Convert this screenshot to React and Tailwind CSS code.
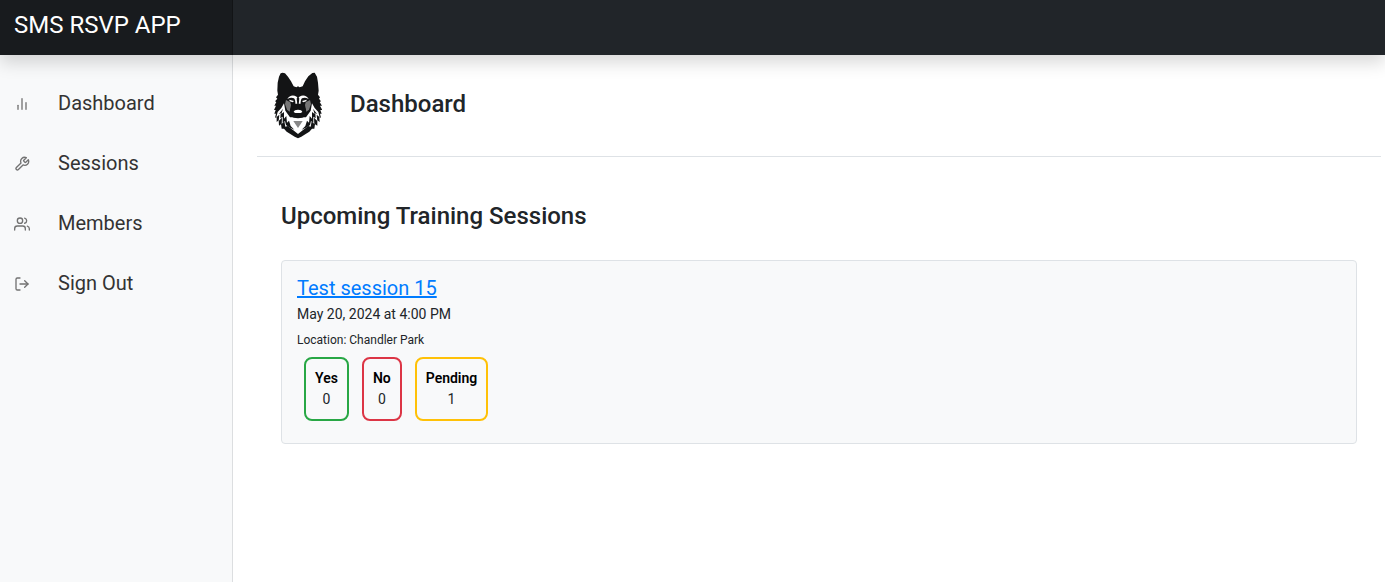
import { FiBarChart2, FiLogOut, FiTool, FiUsers } from 'react-icons/fi';

const navItems = [
    { label: 'Dashboard', icon: FiBarChart2 },
    { label: 'Sessions', icon: FiTool },
    { label: 'Members', icon: FiUsers },
    { label: 'Sign Out', icon: FiLogOut },
];

const sessions = [
    {
        title: 'Test session 15',
        date: 'May 20, 2024 at 4:00 PM',
        location: 'Chandler Park',
        yes: 0,
        no: 0,
        pending: 1,
    },
];

function Logo() {
    return (
        <svg viewBox="30 27 144 204" className="h-[68px] w-12" role="img" aria-label="Logo">
            {/* head silhouette */}
            <path
                fill="#131415"
                d="M56 32 L63 34 L72 44 L81 58 L89 73 L97 76 L102 73 L107 76 L116 73 L123 58 L133 43 L145 33 L152 32 L159 44 L162 62 L164 86 L162 98 L168 106 L165 110 L171 118 L167 120 L174 131 L168 131 L175 144 L169 144 L173 155 L168 155 L171 167 L166 166 L167 180 L160 175 L160 191 L153 187 L151 200 L144 200 L136 209 L125 216 L112 224 L102 229 L92 224 L79 216 L68 209 L60 200 L53 200 L51 187 L45 191 L44 175 L38 180 L38 166 L33 167 L36 155 L31 155 L35 144 L30 144 L36 131 L31 131 L37 120 L33 118 L40 110 L36 106 L42 98 L40 86 L41 62 L45 44 L50 34 Z"
            />
            {/* ruff */}
            <path
                fill="#fff"
                d="M60 124 L52 138 L41 150 L37 166 L46 158 L44 177 L54 167 L53 186 L61 178 L64 194 L71 192 L86 203 L102 216 L118 203 L133 192 L140 194 L143 178 L151 186 L150 167 L160 177 L158 158 L167 166 L163 150 L152 138 L144 124 L140 146 L126 166 H78 L64 146 Z"
            />
            {/* dark tufts in the ruff */}
            <path fill="#131415" d="M57 140 L52 156 L60 150 L60 170 L67 162 L69 182 L75 176 L80 192 L91 203 L75 196 L66 189 L63 177 L56 182 L56 164 L49 169 L50 153 L44 157Z" />
            <path fill="#131415" d="M147 140 L152 156 L144 150 L144 170 L137 162 L135 182 L129 176 L124 192 L113 203 L129 196 L138 189 L141 177 L148 182 L148 164 L155 169 L154 153 L160 157Z" />
            {/* cheeks */}
            <path fill="#777" d="M66 114 L79 121 L81 129 L77 149 L69 143 L63 126Z" />
            <path fill="#777" d="M138 114 L125 121 L123 129 L127 149 L135 143 L141 126Z" />
            {/* brows and eyes */}
            <g fill="#fff">
                <path d="M70 111 Q77 98 92 101 Q99 102 102 110 Q105 102 112 101 Q127 98 134 111 Q122 104 114 109 Q109 113 110 130 H94 Q95 113 90 109 Q82 104 70 111Z" />
                <path d="M76 113 L90 117 L86 121 L77 118Z" />
                <path d="M128 113 L114 117 L118 121 L127 118Z" />
            </g>
            {/* muzzle */}
            <path fill="#131415" d="M98 109 Q102 105 106 109 L104 128 H100Z" />
            <path
                fill="#131415"
                d="M84 127 L95 125 H109 L120 127 L126 146 L124 163 Q116 169 102 169 Q88 169 80 163 L78 146Z"
            />
            <path fill="#fff" d="M89 150 Q91 143 102 143 Q113 143 115 150 L110 153 H94Z" />
            <path fill="#888" d="M88 177 H116 L102 198Z" />
        </svg>
    );
}

function Header() {
    return (
        <header className="relative z-10 flex bg-[#212529] shadow-[0_8px_16px_rgba(0,0,0,0.15)]">
            <a
                href="#"
                className="w-[233px] shrink-0 bg-black/25 px-3.5 pt-[9px] pb-3.5 text-2xl text-white shadow-[inset_-1px_0_0_rgba(0,0,0,0.25)]"
            >
                SMS RSVP APP
            </a>
        </header>
    );
}

function Sidebar() {
    return (
        <nav className="w-[233px] shrink-0 border-r border-[#dcdee0] bg-[#f8f9fa] pt-[18px]">
            <ul>
                {navItems.map(({ label, icon: Icon }) => (
                    <li key={label}>
                        <a href="#" className="flex h-[60px] items-center gap-7 px-3.5 text-xl text-[#333]">
                            <Icon size={16} className="mt-0.5 text-[#727272]" />
                            {label}
                        </a>
                    </li>
                ))}
            </ul>
        </nav>
    );
}

function Count({ label, value, className }) {
    return (
        <div className={`rounded-lg border-2 px-[9px] py-[9px] text-center ${className}`}>
            <div className="font-semibold text-black">{label}</div>
            <div>{value}</div>
        </div>
    );
}

function SessionCard({ session }) {
    return (
        <li className="rounded-sm border border-[#dee2e6] bg-[#f8f9fa] px-[15px] pt-3 pb-[22px]">
            <a href="#" className="block w-fit text-xl leading-[30px] text-[#007bff] underline">
                {session.title}
            </a>
            <p className="text-sm leading-[22px]">{session.date}</p>
            <p className="pt-1 text-xs leading-[22px]">Location: {session.location}</p>
            <div className="mt-1.5 ml-[7px] flex gap-[13px] text-sm leading-[21px]">
                <Count label="Yes" value={session.yes} className="border-[#28a745]" />
                <Count label="No" value={session.no} className="border-[#dc3545]" />
                <Count label="Pending" value={session.pending} className="border-[#ffc107]" />
            </div>
        </li>
    );
}

export default function App() {
    return (
        <div className="flex min-h-screen flex-col bg-white font-['Roboto',sans-serif] text-[#212529]">
            <Header />
            <div className="flex grow">
                <Sidebar />
                <main className="grow pr-1 pl-6">
                    <div className="flex items-center gap-7 border-b border-[#dee2e6] pt-4 pb-[17px] pl-[17px]">
                        <Logo />
                        <h1 className="pb-0.5 text-2xl font-medium">Dashboard</h1>
                    </div>
                    <section className="px-6 pt-[43px]">
                        <h2 className="text-2xl font-medium">Upcoming Training Sessions</h2>
                        <ul className="mt-7">
                            {sessions.map((session) => (
                                <SessionCard key={session.title} session={session} />
                            ))}
                        </ul>
                    </section>
                </main>
            </div>
        </div>
    );
}
